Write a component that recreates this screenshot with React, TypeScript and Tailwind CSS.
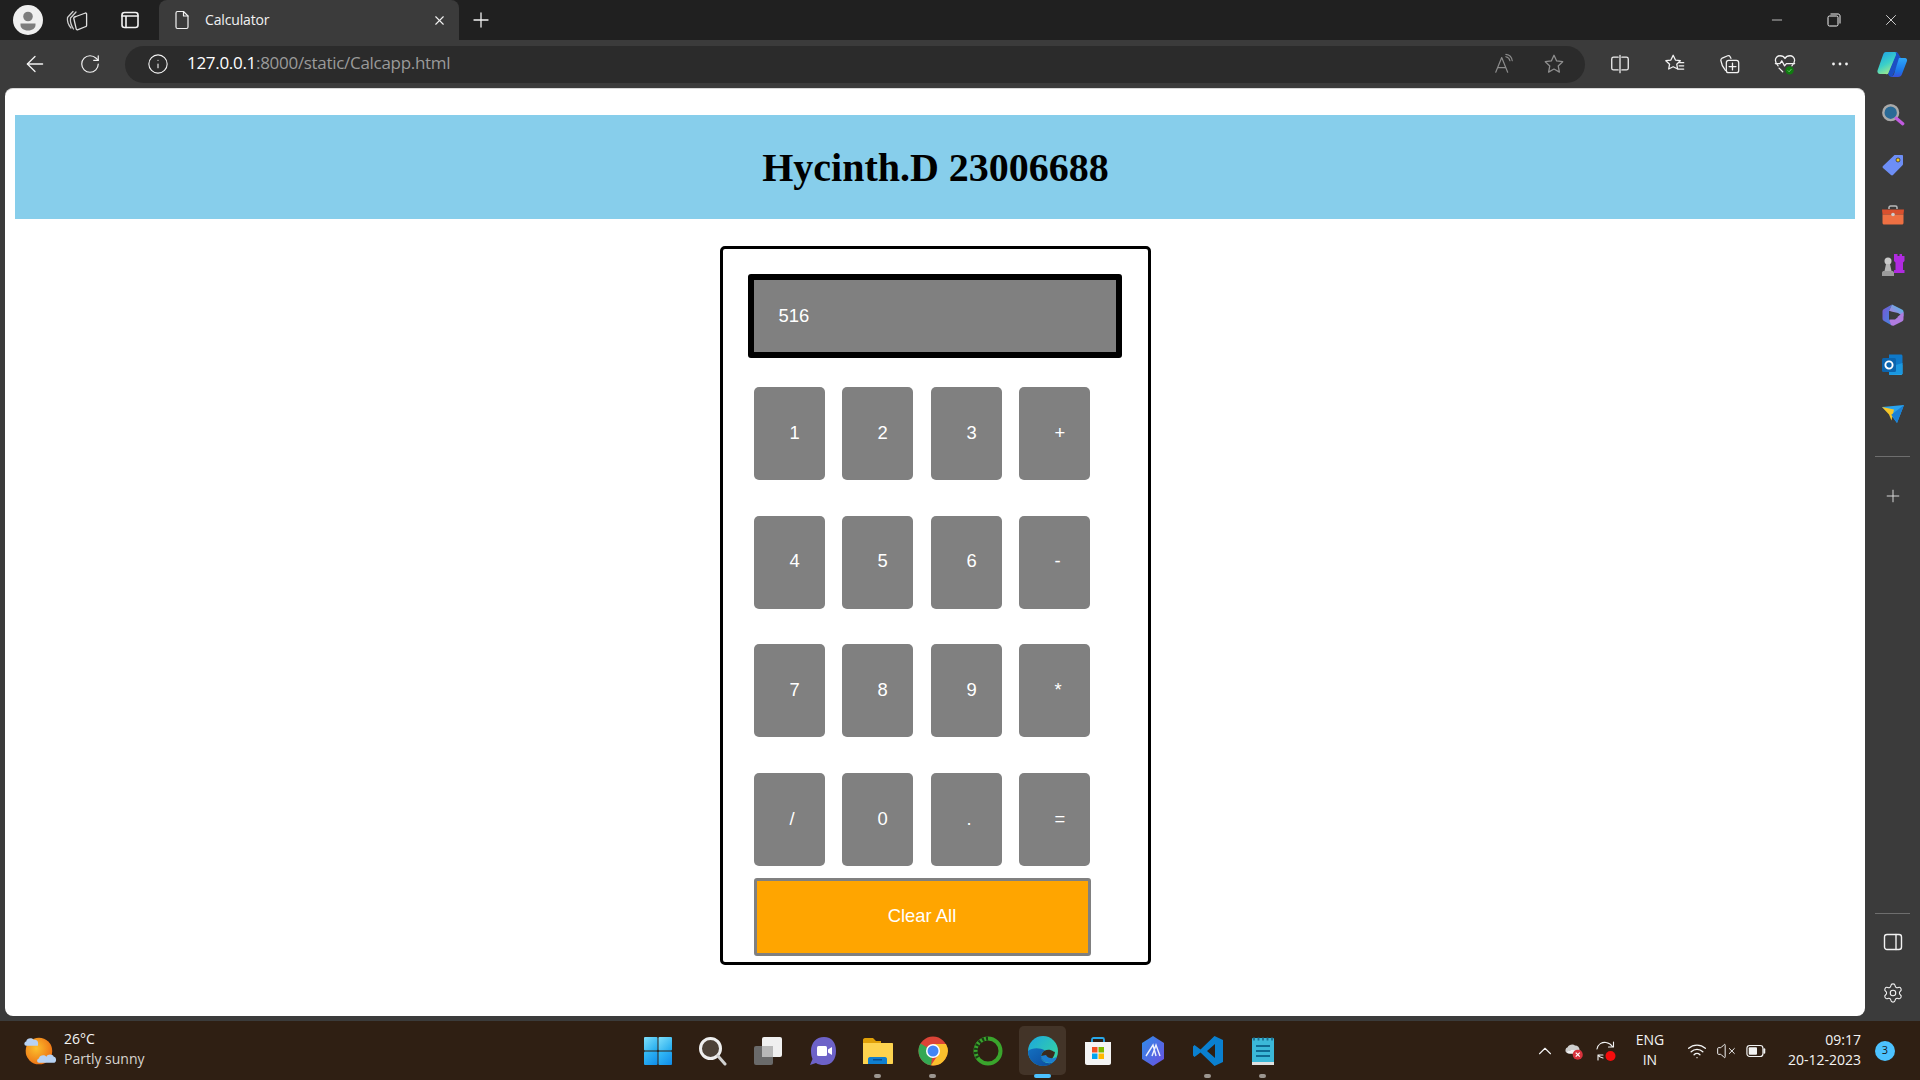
import React from "react";
import { ArrowLeft, RotateCw, Info, X, Plus, Minus, Settings, ChevronUp, Wifi, VolumeX } from "lucide-react";

const Svg = ({ s = 24, children, vb = "0 0 24 24" }: { s?: number; children: React.ReactNode; vb?: string }) => (
  <svg width={s} height={s} viewBox={vb} fill="none" className="block shrink-0">
    {children}
  </svg>
);

const line = { stroke: "#f2f2f2", strokeWidth: 1.4, strokeLinecap: "round" as const, strokeLinejoin: "round" as const };

const Profile = () => (
  <Svg s={30} vb="0 0 30 30">
    <circle cx="15" cy="15" r="15" fill="#f0f0f0" />
    <circle cx="15" cy="11.5" r="4.8" fill="#7d7d7d" />
    <path d="M7.5 18.5h15v1.5c0 3-3 5.5-7.5 5.5s-7.5-2.500-7.500-5.500z" fill="#7d7d7d" />
  </Svg>
);
const Collections = () => (
  <Svg s={24}>
    <path d="M6 20C3.500 17 2 13 2.500 9.500L8 3.500" stroke="#cfcfcf" strokeWidth="1.300" strokeLinecap="round" strokeLinejoin="round" />
    <path d="M8.500 21C6.500 18 5 14 5.500 10L11 4" stroke="#cfcfcf" strokeWidth="1.300" strokeLinecap="round" strokeLinejoin="round" />
    <path d="M11 8.500l9.500-3.500c.6-.1 1.100.3 1.100 1v11.500c0 .5-.3.900-.7 1l-8.400 3.300c-.6.100-1.200-.3-1.300-.9L8.700 10c0-.6.800-1.200 2.300-1.500z" stroke="#e0e0e0" strokeWidth="1.300" strokeLinejoin="round" />
  </Svg>
);
const VerticalTabs = () => (
  <Svg s={20} vb="0 0 20 20">
    <rect x="2" y="2.500" width="16" height="15" rx="2.500" {...line} strokeWidth={1.6} />
    <path d="M2 6h16M6 6v11.500" {...line} strokeWidth={1.6} />
  </Svg>
);
const FileIcon = () => (
  <Svg s={20} vb="0 0 20 20">
    <path d="M4 3c0-.8.600-1.500 1.500-1.500h6L16 6v11c0 .8-.7 1.500-1.500 1.500h-9C4.700 18.500 4 17.800 4 17z" {...line} strokeWidth={1.2} />
    <path d="M11.500 1.500V6H16" {...line} strokeWidth={1.2} />
  </Svg>
);
const ReadAloud = () => (
  <Svg s={22}>
    <path d="M3 21L9.500 5 16 21M5.500 16h8" stroke="#8c8c8c" strokeWidth="1.300" strokeLinecap="round" strokeLinejoin="round" />
    <path d="M14 4c2.500.5 4 2 4.500 4.500M14 1.500c4 .5 6.500 3 7 7" stroke="#8c8c8c" strokeWidth="1.200" strokeLinecap="round" />
  </Svg>
);
const Star = ({ c = "#8f8f8f" }: { c?: string }) => (
  <Svg s={22}>
    <path d="M12 2.500l2.900 6.200 6.600.8-4.900 4.600 1.300 6.700-5.900-3.300-5.900 3.300 1.300-6.700L2.500 9.500l6.600-.8z" stroke={c} strokeWidth="1.400" strokeLinejoin="round" />
  </Svg>
);
const Split = () => (
  <Svg s={22}>
    <path d="M10 4.500H5c-1.200 0-2 .8-2 2v10c0 1.200.8 2 2 2h5M14 4.500h5c1.200 0 2 .8 2 2v10c0 1.200-.8 2-2 2h-5M12 2.500v19" {...line} />
  </Svg>
);
const Favorites = () => (
  <Svg s={22}>
    <path d="M10 2.500l2.500 5.200 5.300.7-3.900 3.800 1 5.300L10 15l-4.900 2.500 1-5.300L2 8.400l5.500-.7z" {...line} />
    <path d="M17 10.500h4.500M16.500 14h5M15.500 17.500h6" {...line} />
  </Svg>
);
const CollectionsAdd = () => (
  <Svg s={22}>
    <path d="M7 19C4.500 16 2.500 12 2 8c0-1 .5-2 1.500-2.500l6-2.500c1-.4 2-.1 2.500 .8l1 2" {...line} />
    <rect x="8" y="8" width="13.500" height="13.500" rx="2.500" {...line} />
    <path d="M14.700 11v7.500M11 14.800h7.500" {...line} />
  </Svg>
);
const Health = () => (
  <Svg s={22}>
    <path d="M4.500 14C2.500 12 1.500 10 1.500 8c0-3 2.500-5 5-5 2 0 4.500 1 5.500 3 1-2 3.500-3 5.500-3 2.500 0 5 2 5 5 0 2-1 4-3 6" {...line} />
    <path d="M1.500 11.500h5l2-3 3 5.500 2-2.500h9M5.500 16.500l4 4" {...line} />
    <circle cx="17" cy="19" r="4.500" fill="#107c10" />
    <path d="M15 19l1.500 1.500 2.500-3" stroke="#6fd06f" strokeWidth="1" />
  </Svg>
);
const Dots = () => (
  <Svg s={20} vb="0 0 20 20">
    <circle cx="3.500" cy="10" r="1.400" fill="#f2f2f2" />
    <circle cx="10" cy="10" r="1.400" fill="#f2f2f2" />
    <circle cx="16.500" cy="10" r="1.400" fill="#f2f2f2" />
  </Svg>
);
const Copilot = () => (
  <Svg s={32} vb="0 0 32 32">
    <defs>
      <linearGradient id="cpa" x1="0" y1="0" x2="0.500" y2="1">
        <stop offset="0" stopColor="#1b9de8" />
        <stop offset="0.600" stopColor="#3bd0c8" />
        <stop offset="1" stopColor="#9ee88c" />
      </linearGradient>
      <linearGradient id="cpb" x1="0.500" y1="0" x2="0.500" y2="1">
        <stop offset="0" stopColor="#2ea7f7" />
        <stop offset="0.700" stopColor="#1b74ea" />
        <stop offset="1" stopColor="#3a50d9" />
      </linearGradient>
    </defs>
    <path d="M10 4h10c1 0 1.500 1 1 2l-8 19c-.5 1-2 1.500-3 1H4c-2 0-3-2-2.500-3.500L7 7c.5-2 1.500-3 3-3z" fill="url(#cpa)" />
    <path d="M19 4c2 0 3.500 1 4 3l2 3-9 19c-2 0-3-1-4-3l8-19c.3-1-.2-3-1-3z" fill="#1c4fc4" />
    <path d="M23 10h6c1.500 0 2.500 1.500 2 3l-5 13c-.5 2-2 3-4 3h-8c2 0 3-1 4-3z" fill="url(#cpb)" />
  </Svg>
);

const SearchApp = () => (
  <Svg s={24} vb="0 0 26 26">
    <circle cx="10.500" cy="10.500" r="8" fill="#2a6a96" stroke="#a9a9a9" strokeWidth="2.600" />
    <path d="M16.500 16.500l7 6" stroke="#c15be0" strokeWidth="3.600" strokeLinecap="round" />
  </Svg>
);
const Tag = () => (
  <Svg s={24}>
    <path d="M14 2h7c.6 0 1 .4 1 1v8c0 .5-.2.900-.5 1.200L12 22c-.6.600-1.400.600-2 0l-8-7c-.6-.6-.6-1.500 0-2L13 2.400c.3-.3.600-.4 1-.4z" fill="#6d8ef5" />
    <circle cx="17" cy="7" r="2" fill="#f3c81d" stroke="#333" strokeWidth=".8" />
  </Svg>
);
const Toolbox = () => (
  <Svg s={24}>
    <path d="M8 6V4.500C8 3.700 8.700 3 9.500 3h5c.8 0 1.500.7 1.500 1.500V6" stroke="#b9b9b9" strokeWidth="1.500" />
    <path d="M1 6.500h22l-.5 5H1.500z" fill="#d9502e" />
    <path d="M1.500 11.500h21V20c0 .8-.7 1.500-1.500 1.500H3c-.8 0-1.500-.7-1.500-1.500z" fill="#ee7043" />
    <circle cx="12" cy="11.500" r="1.800" fill="#cdcdcd" />
  </Svg>
);
const Chess = () => (
  <Svg s={24}>
    <path d="M14 1h2.500v2h2V1H21v2h2.500v5L22 9.500V17h1.500v3H13v-3h1.500V9.500L13 8V1z" fill="#b02be0" />
    <circle cx="7" cy="8" r="3.500" fill="#c9c9c9" />
    <path d="M5 11h4l1.500 7h-7z" fill="#b5b5b5" />
    <path d="M1 20c0-1.500 1-2 2-2h8c1 0 2 .5 2 2v3H1z" fill="#9b9b9b" />
  </Svg>
);
const M365 = () => (
  <Svg s={24}>
    <defs>
      <linearGradient id="m1" x1="0" y1="0" x2="1" y2="1">
        <stop offset="0" stopColor="#7a55d6" />
        <stop offset="1" stopColor="#3f8ae0" />
      </linearGradient>
      <linearGradient id="m2" x1="0" y1="1" x2="1" y2="0">
        <stop offset="0" stopColor="#c770d8" />
        <stop offset="1" stopColor="#3ec4ea" />
      </linearGradient>
    </defs>
    <path d="M11 1.500L3 6c-1 .6-1.500 1.500-1.500 2.500v7c0 1 .5 2 1.500 2.500l8 4.500-3-6V8z" fill="url(#m1)" />
    <path d="M11 1.500l10 5c1 .5 1.500 1.500 1.500 2.500v4.500L17 10l-9-2z" fill="url(#m2)" />
    <path d="M22.500 9v7c0 1-.5 2-1.500 2.500L13 22.500c-1 .5-2 .2-3-.5l-2-5.500 9-3z" fill="#b07ce0" />
    <path d="M8 8l6 2.500 3 3.500-3 2.500H8z" fill="#3b3b3b" />
  </Svg>
);
const Outlook = () => (
  <Svg s={24}>
    <path d="M8 1.500h12c.8 0 1.500.7 1.500 1.500v9H8z" fill="#0f79c9" />
    <path d="M8 12h13.500v8.500c0 .8-.7 1.500-1.500 1.500H8z" fill="#28a8ea" />
    <path d="M8 14l13.500-4v11L8 22z" fill="#1a97e0" />
    <rect x="1" y="5" width="14" height="14" rx="1.500" fill="#0c64ad" />
    <circle cx="8" cy="12" r="3.600" stroke="#fff" strokeWidth="1.900" />
  </Svg>
);
const Send = () => (
  <Svg s={24}>
    <path d="M1 4l22-2-7 18-6-8z" fill="#2aa3ee" />
    <path d="M1 4l12 2.500-2.500 11-2.500-6z" fill="#f6c628" />
    <path d="M23 2L10 12l1 .5 5 7.500z" fill="#1a80d6" />
  </Svg>
);
const Panel = () => (
  <Svg s={20} vb="0 0 20 20">
    <rect x="1.500" y="2.500" width="17" height="15" rx="2.500" {...line} />
    <path d="M13 2.500v15" {...line} />
  </Svg>
);
const Weather = () => (
  <Svg s={34} vb="0 0 32 32">
    <defs>
      <radialGradient id="sun" cx="0.400" cy="0.400" r="0.700">
        <stop offset="0" stopColor="#fbc02d" />
        <stop offset="1" stopColor="#ec6a12" />
      </radialGradient>
    </defs>
    <circle cx="15" cy="16" r="12.500" fill="url(#sun)" />
    <path d="M3 11c-2 0-2.500-3.500 0-4 .5-3 5-4 7-1.500 3-.5 5 1.500 4 5.500z" fill="#b7d2f3" />
    <path d="M15 27c-2 0-2.500-3.500 0-4 .5-3 5-4 7-1.500 1-3 6-3 7 0 2.500 0 3 5 .5 5.500z" fill="#b7d2f3" />
  </Svg>
);
const StartIcon = () => (
  <Svg s={30} vb="0 0 30 30">
    <defs>
      <linearGradient id="w1" x1="0" y1="0" x2="1" y2="1">
        <stop offset="0" stopColor="#7fe0fb" />
        <stop offset="1" stopColor="#1fa9ee" />
      </linearGradient>
      <linearGradient id="w2" x1="0" y1="0" x2="1" y2="1">
        <stop offset="0" stopColor="#38c0f8" />
        <stop offset="1" stopColor="#0f8be8" />
      </linearGradient>
    </defs>
    <rect x="1" y="1" width="13.500" height="13.500" rx="1" fill="url(#w1)" />
    <rect x="15.500" y="1" width="13.500" height="13.500" rx="1" fill="url(#w1)" />
    <rect x="1" y="15.500" width="13.500" height="13.500" rx="1" fill="url(#w2)" />
    <rect x="15.500" y="15.500" width="13.500" height="13.500" rx="1" fill="url(#w2)" />
  </Svg>
);
const TaskSearch = () => (
  <Svg s={30} vb="0 0 30 30">
    <circle cx="12.500" cy="12.500" r="10" fill="#4d4238" stroke="#efefef" strokeWidth="3" />
    <path d="M20 20l7 8" stroke="#d0d0d0" strokeWidth="3" strokeLinecap="round" />
  </Svg>
);
const TaskView = () => (
  <Svg s={30} vb="0 0 30 30">
    <rect x="1" y="10" width="19" height="19" rx="2" fill="#6a6a6a" />
    <rect x="9" y="1" width="20" height="20" rx="2" fill="#f0f0f0" />
    <rect x="9" y="10" width="11" height="11" fill="#b8b8b8" />
  </Svg>
);
const Chat = () => (
  <Svg s={30} vb="0 0 30 30">
    <path d="M16 1C8 1 3 7 3 15c0 3 .6 6 1.500 8L2 29l6-2c2 1.500 5 2 8 2 8 0 12-6 12-14S24 1 16 1z" fill="#6d62c8" />
    <rect x="9" y="10" width="10" height="10" rx="1.500" fill="#fff" />
    <path d="M20 13.500l4-2.500v8l-4-2.500z" fill="#fff" />
  </Svg>
);
const Folder = () => (
  <Svg s={32} vb="0 0 32 32">
    <path d="M1 5c0-1 .7-2 2-2h8l3 3h5v20H1z" fill="#e0a008" />
    <path d="M1 8h29c.6 0 1 .4 1 1v19c0 .6-.4 1-1 1H1z" fill="#fdd34f" />
    <path d="M6 29v-5c0-1 .7-2 2-2h15c1.300 0 2 1 2 2v5z" fill="#0f7fd0" />
    <rect x="11" y="24" width="9" height="1.500" fill="#0a4f90" />
  </Svg>
);
const Chrome = () => (
  <Svg s={30} vb="0 0 30 30">
    <circle cx="15" cy="15" r="14.500" fill="#db4437" />
    <path d="M15 15L2.500 7.500A14.500 14.500 0 0 0 13 29.300z" fill="#34a853" />
    <path d="M15 8h13a14.500 14.500 0 0 1-15 21.300L20 19z" fill="#fbc02d" />
    <circle cx="15" cy="15" r="7" fill="#fff" />
    <circle cx="15" cy="15" r="5.500" fill="#4285f4" />
  </Svg>
);
const RingApp = () => (
  <Svg s={30} vb="0 0 30 30">
    <circle cx="15" cy="15" r="12.500" stroke="#3aa52c" strokeWidth="4" />
    <path d="M15 2.500A12.500 12.500 0 0 0 5 22" stroke="#1c3a16" strokeWidth="4" strokeDasharray="2 2" />
  </Svg>
);
const Edge = () => (
  <Svg s={32} vb="0 0 32 32">
    <defs>
      <linearGradient id="e1" x1="0" y1="0" x2="1" y2="0.800">
        <stop offset="0" stopColor="#1ba6e0" />
        <stop offset="1" stopColor="#37d6a0" />
      </linearGradient>
      <linearGradient id="e2" x1="0" y1="0" x2="1" y2="1">
        <stop offset="0" stopColor="#1470c0" />
        <stop offset="1" stopColor="#0c4a9c" />
      </linearGradient>
    </defs>
    <circle cx="16" cy="16" r="15" fill="url(#e1)" />
    <path d="M1 16c0 8 6 15 15 15 4 0 8-1 10-3.500-6 2-12-1-12-6 0-3 2-5 4-6-5-3-13-3-17 .5z" fill="url(#e2)" />
    <path d="M18 15.500c2-1 6-1 8.500 1 .5.400 1 .5 1.500 .3-.5 5-4 9-7 10-3 .5-6.500-1.500-7-5 0-2.500 2-5.300 4-6.300z" fill="#3b2a1e" />
    <path d="M14 21c0 5 6 8 12 6.500 2-1.500 3.500-3.500 4-6-4 3-9 2-11-1.500z" fill="#1c7fd0" />
  </Svg>
);
const Store = () => (
  <Svg s={30} vb="0 0 30 30">
    <path d="M9 6V3.500C9 2.700 9.700 2 10.500 2h9c.8 0 1.500.7 1.500 1.500V6" stroke="#28a8ea" strokeWidth="1.800" />
    <path d="M2 6h26v21c0 1-.9 2-2 2H4c-1.100 0-2-1-2-2z" fill="#f4f4f4" />
    <rect x="9" y="11" width="5.500" height="5.500" fill="#f25022" />
    <rect x="15.500" y="11" width="5.500" height="5.500" fill="#7fba00" />
    <rect x="9" y="17.500" width="5.500" height="5.500" fill="#00a4ef" />
    <rect x="15.500" y="17.500" width="5.500" height="5.500" fill="#ffb900" />
  </Svg>
);
const Hex = () => (
  <Svg s={30} vb="0 0 30 30">
    <defs>
      <linearGradient id="hx" x1="0" y1="0" x2="1" y2="1">
        <stop offset="0" stopColor="#2f8de8" />
        <stop offset="1" stopColor="#6b4fe0" />
      </linearGradient>
    </defs>
    <path d="M15 0l11 7v16l-11 7-11-7V7z" fill="url(#hx)" />
    <path d="M8 20l7-11 3 11M14 20l4-11 4 11" stroke="#fff" strokeWidth="1.400" opacity="0.900" />
  </Svg>
);
const VSCode = () => (
  <Svg s={30} vb="0 0 30 30">
    <path d="M21.500 0L30 4v22l-8.500 4-14-13.500-6 4.500L0 19.500V10.500L1.500 9l6 4.500zM22 8l-8 7 8 7z" fill="#0a80d0" fillRule="evenodd" />
  </Svg>
);
const Notepad = () => (
  <Svg s={30} vb="0 0 30 30">
    <rect x="4" y="2" width="22" height="27" rx="1" fill="#3bb8d8" />
    <rect x="4" y="26" width="22" height="3" fill="#e0e0e0" />
    <path d="M6 1.500v3M10.500 1.500v3M15 1.500v3M19.500 1.500v3M24 1.500v3" stroke="#1b6f92" strokeWidth="1.800" />
    <path d="M8 10h14M8 15h14M8 20h14" stroke="#0f6a92" strokeWidth="2" />
  </Svg>
);
const CloudErr = () => (
  <Svg s={22}>
    <path d="M3 14c-2-1-2-5 1-6 1-3 6-4 8-2 3 0 5 2 5 5H8c-2 0-3 2-5 3z" fill="#cfcfcf" />
    <path d="M3 14c1-2 3-3 5-3h9c2 1 1 4-1 4H6c-1 0-2-.5-3-1z" fill="#f2f2f2" />
    <circle cx="15" cy="16" r="5.500" fill="#d8323c" />
    <path d="M12.800 13.800l4.400 4.400M17.200 13.800l-4.400 4.400" stroke="#fff" strokeWidth="1.300" />
  </Svg>
);
const SyncDot = () => (
  <Svg s={24}>
    <path d="M2 10c1-5 5-7 9-6.500 3 .4 5 2 6.500 4M18.500 3v5h-5" {...line} strokeWidth={1.100} />
    <path d="M8 19c-2-.5-4-1.500-5-3M3 21v-5h5" {...line} strokeWidth={1.100} />
    <circle cx="15.500" cy="17" r="5" fill="#f50d0d" />
  </Svg>
);
const Battery = () => (
  <Svg s={22}>
    <rect x="1" y="6" width="17.500" height="12" rx="3" stroke="#f2f2f2" strokeWidth="1.300" />
    <rect x="3" y="8" width="9" height="8" rx="1" fill="#f2f2f2" />
    <path d="M20 10v4" stroke="#f2f2f2" strokeWidth="2" strokeLinecap="round" />
  </Svg>
);

const keys = [
  ["1", "2", "3", "+"],
  ["4", "5", "6", "-"],
  ["7", "8", "9", "*"],
  ["/", "0", ".", "="],
];

const dock: { icon: React.ReactNode; dot?: boolean; active?: boolean }[] = [
  { icon: <StartIcon /> },
  { icon: <TaskSearch /> },
  { icon: <TaskView /> },
  { icon: <Chat /> },
  { icon: <Folder />, dot: true },
  { icon: <Chrome />, dot: true },
  { icon: <RingApp /> },
  { icon: <Edge />, active: true },
  { icon: <Store /> },
  { icon: <Hex /> },
  { icon: <VSCode />, dot: true },
  { icon: <Notepad />, dot: true },
];

const ToolBtn = ({ children }: { children: React.ReactNode }) => (
  <div className="flex w-[55px] h-full items-center justify-center">{children}</div>
);

const SideIcon = ({ children }: { children: React.ReactNode }) => (
  <div className="flex h-[50px] items-center justify-center">{children}</div>
);

export default function App() {
  return (
    <div className="flex h-[1080px] w-[1920px] flex-col overflow-hidden bg-[#3b3b3b] font-['Open_Sans','Noto_Sans',sans-serif]">
      {/* Tab strip */}
      <div className="flex h-10 items-stretch bg-[#202020]">
        <div className="flex w-14 items-center justify-center"><Profile /></div>
        <div className="flex w-[42px] items-center justify-center"><Collections /></div>
        <div className="flex w-[61px] items-center justify-center pl-[2px]"><VerticalTabs /></div>
        <div className="flex w-[300px] items-center rounded-t-lg bg-[#3b3b3b] pl-[13px] pr-[12px] text-[#f2f2f2]">
          <FileIcon />
          <span className="mb-[2px] ml-[13px] flex-1 text-[14px] tracking-[-0.15px]">Calculator</span>
          <X size={15} strokeWidth={1.8} color="#f2f2f2" />
        </div>
        <div className="flex w-[44px] items-center justify-center"><Plus size={24} strokeWidth={1.3} color="#f2f2f2" /></div>
        <div className="ml-auto flex items-center text-[#f2f2f2]">
          <div className="flex w-[57px] justify-center"><Minus size={16} strokeWidth={1.1} /></div>
          <div className="flex w-[57px] justify-center">
            <Svg s={14} vb="0 0 14 14">
              <rect x="1" y="3" width="10" height="10" rx="1.500" stroke="#f2f2f2" strokeWidth="1" />
              <path d="M3.500 1h7.500c1.200 0 2 .8 2 2v7.500" stroke="#f2f2f2" strokeWidth="1" />
            </Svg>
          </div>
          <div className="flex w-[58px] justify-center pr-[1px]"><X size={18} strokeWidth={1.1} /></div>
        </div>
      </div>

      {/* Toolbar */}
      <div className="flex h-12 items-center pl-[7px]">
        <ToolBtn><ArrowLeft size={26} strokeWidth={1.2} color="#f2f2f2" /></ToolBtn>
        <ToolBtn><RotateCw size={22} strokeWidth={1.3} color="#f2f2f2" /></ToolBtn>
        <div className="ml-[8px] flex h-[37px] w-[1460px] items-center rounded-full bg-[#2b2b2b] pl-[22px] pr-[20px]">
          <Info size={22} strokeWidth={1.2} color="#f2f2f2" />
          <span className="mb-[2px] ml-[18px] flex-1 text-[17px] tracking-[-0.3px] text-[#9a9a9a]">
            <span className="text-white">127.0.0.1</span>:8000/static/Calcapp.html
          </span>
          <ReadAloud />
          <div className="ml-[28px]"><Star /></div>
        </div>
        <div className="ml-[7px] flex h-full items-center">
          <ToolBtn><Split /></ToolBtn>
          <ToolBtn><Favorites /></ToolBtn>
          <ToolBtn><CollectionsAdd /></ToolBtn>
          <ToolBtn><Health /></ToolBtn>
          <ToolBtn><Dots /></ToolBtn>
          <div className="flex w-[50px] justify-center"><Copilot /></div>
        </div>
      </div>

      {/* Middle */}
      <div className="flex h-[933px] items-start pl-[5px]">
        <main className="h-[928px] w-[1860px] rounded-[8px] border-t border-[#d8d8d8] bg-white px-[10px] pt-[26px] font-['Liberation_Sans',Arial,sans-serif]">
          <header className="flex h-[104px] items-center justify-center bg-[#87ceeb] pl-[1px] pt-[2px]">
            <h1 className="font-['Liberation_Serif','Times_New_Roman',serif] text-[40px] font-bold leading-none text-black">
              Hycinth.D 23006688
            </h1>
          </header>
          <section className="mx-auto mt-[27px] h-[719px] w-[431px] rounded-[5px] border-[3px] border-black pl-[25px] pt-[25px]">
            <div className="flex h-[84px] w-[374px] items-center rounded-[3px] border-[6px] border-black bg-[#808080] pb-[1px] pl-[25px] text-[18.4px] text-white">
              516
            </div>
            <div className="ml-[6px] mt-[29px] grid grid-cols-[88px_89px_88px_71px] grid-rows-[93px_93px_93px_93px] gap-y-[35.67px]">
              {keys.flat().map((k) => (
                <div key={k} className="flex h-[93px] w-[71px] items-center rounded-[5px] bg-[#808080] pb-[2px] pl-[36px] text-[18.4px] text-white">
                  {k}
                </div>
              ))}
            </div>
            <div className="ml-[6px] mt-[12px] flex h-[78px] w-[337px] items-center justify-center rounded-[3px] border-[3px] border-[#808080] bg-[#ffa500] pb-[2px] text-[18.4px] text-white">
              Clear All
            </div>
          </section>
        </main>

        {/* Sidebar */}
        <aside className="flex h-full w-[55px] flex-col pt-[2px] text-[#f2f2f2]">
          <SideIcon><SearchApp /></SideIcon>
          <SideIcon><Tag /></SideIcon>
          <SideIcon><Toolbox /></SideIcon>
          <SideIcon><Chess /></SideIcon>
          <SideIcon><M365 /></SideIcon>
          <SideIcon><Outlook /></SideIcon>
          <SideIcon><Send /></SideIcon>
          <div className="mx-auto mt-[16px] h-px w-[35px] bg-[#6e6e6e]" />
          <div className="flex h-[78px] items-center justify-center"><Plus size={20} strokeWidth={1.2} color="#d8d8d8" /></div>
          <div className="mt-auto mx-auto h-px w-[35px] bg-[#6e6e6e]" />
          <div className="flex h-[56px] items-center justify-center"><Panel /></div>
          <div className="mb-[5px] flex h-[46px] items-center justify-center"><Settings size={22} strokeWidth={1.2} color="#f2f2f2" /></div>
        </aside>
      </div>

      {/* Taskbar */}
      <footer className="grid h-[59px] grid-cols-[1fr_auto_1fr] items-center bg-[#2f1f13] text-[#f4f4f4]">
        <div className="flex items-center pl-[23px]">
          <Weather />
          <div className="mb-[3px] ml-[7px] flex flex-col text-[14px] leading-[20px]">
            <span>26°C</span>
            <span className="text-[#d8d4d0]">Partly sunny</span>
          </div>
        </div>
        <div className="flex h-full items-center">
          {dock.map((d, i) => (
            <div key={i} className="relative flex h-full w-[55px] items-center justify-center">
              {d.active && <div className="absolute left-[4px] top-[5px] h-[49px] w-[47px] rounded-[5px] bg-[#433428]" />}
              <div className="relative">{d.icon}</div>
              {d.dot && <div className="absolute bottom-[2px] left-[24px] h-[4px] w-[7px] rounded-full bg-[#9c9690]" />}
              {d.active && <div className="absolute bottom-[2px] left-[19px] h-[4px] w-[17px] rounded-full bg-[#4cc2ff]" />}
            </div>
          ))}
        </div>
        <div className="flex items-center justify-end pr-[25px]">
          <ChevronUp size={22} strokeWidth={1.2} />
          <div className="ml-[8px]"><CloudErr /></div>
          <div className="ml-[9px]"><SyncDot /></div>
          <div className="mb-[2px] ml-[8px] flex w-[46px] flex-col items-center text-[14px] leading-[20px]">
            <span>ENG</span>
            <span>IN</span>
          </div>
          <div className="ml-[14px]"><Wifi size={20} strokeWidth={1.6} /></div>
          <div className="ml-[9px]"><VolumeX size={20} strokeWidth={1.2} /></div>
          <div className="ml-[10px]"><Battery /></div>
          <div className="mb-[2px] ml-[20px] flex flex-col items-end pr-[1px] text-[14px] leading-[20px]">
            <span>09:17</span>
            <span>20-12-2023</span>
          </div>
          <div className="ml-[13px] flex h-5 w-5 items-center justify-center rounded-full bg-[#4cc2ff] text-[11px] text-[#1a1a1a]">3</div>
        </div>
      </footer>
    </div>
  );
}
